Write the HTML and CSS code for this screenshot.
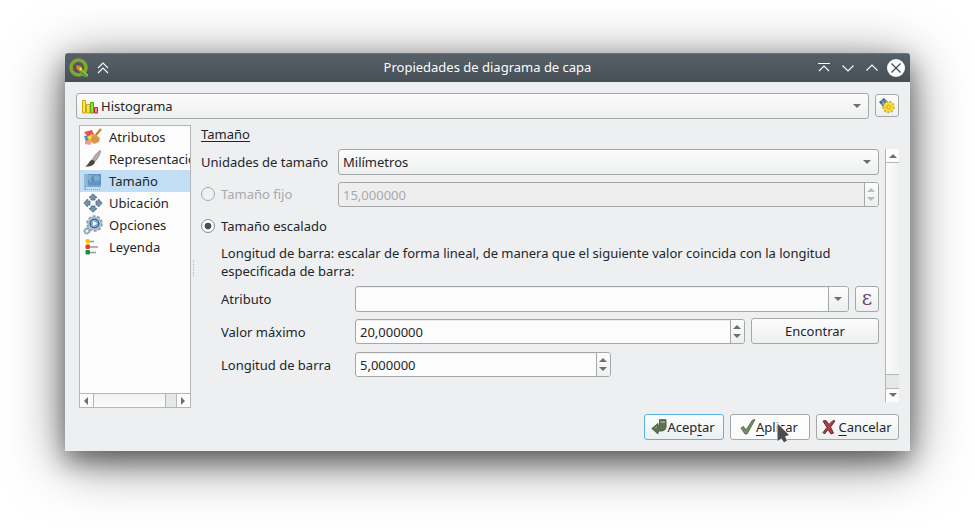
FILE: index.html
```html
<!DOCTYPE html>
<html lang="es">
<head>
<meta charset="utf-8">
<title>Propiedades de diagrama de capa</title>
<link rel="stylesheet" href="styles.css">
</head>
<body>
<div class="window">
  <header class="titlebar">
    <svg class="logo" width="20" height="20" viewBox="0 0 20 20"><circle cx="9.500" cy="9.500" r="7.500" fill="none" stroke="#83a827" stroke-width="3.600"/><path d="M10 9.500l9 7.500v2h-4l-6-7z" fill="#5c9a3c"/><path d="M10.500 10l8.500 7.500" stroke="#a3c644" stroke-width="1.800"/><path d="M7.500 7l5 1.500-2 4-3-1.500z" fill="#ee7f2c"/><path d="M10 11.500l2-2.500 1.500 1.500-2 2.500z" fill="#f0d84c"/></svg>
    <svg class="shade" width="12" height="12" viewBox="0 0 12 12"><path d="M1 6l5-5 5 5M1 11l5-5 5 5"/></svg>
    <h1>Propiedades de diagrama de capa</h1>
    <svg class="ctl" width="12" height="12" viewBox="0 0 12 12"><path d="M0 1.500h12M1 9l5-5 5 5"/></svg>
    <svg class="ctl" width="12" height="12" viewBox="0 0 12 12"><path d="M.5 3.500L6 9l5.500-5.500"/></svg>
    <svg class="ctl" width="12" height="12" viewBox="0 0 12 12"><path d="M.5 8.500L6 3l5.500 5.500"/></svg>
    <svg class="close" width="18" height="18" viewBox="0 0 18 18"><circle cx="9" cy="9" r="9"/><path d="M4.500 4.500l9 9M13.500 4.500l-9 9"/></svg>
  </header>
  <div class="body">
    <div class="toprow">
      <div class="combo type">
        <svg width="16" height="15" viewBox="0 0 16 15"><path d="M.5 1.500h3v12.500h-3z" fill="#fbe34b" stroke="#d1a616"/><path d="M4.500 5.500h3.500v8.500h-3.500z" fill="#fbe34b" stroke="#d1a616"/><path d="M8.500 3.500h3v10.500h-3z" fill="#8be234" stroke="#55a512"/><path d="M12.500 8.500h3v5.500h-3z" fill="#f08e8e" stroke="#c8242c"/></svg>
        <span>Histograma</span><i class="arrow"></i>
      </div>
      <button class="btn gear"><svg width="18" height="17" viewBox="0 0 18 17"><path d="M1 5l5-4 4 4-4 6z" fill="#3f6684"/><path d="M3 3l5 5M8 2L3 8" stroke="#a7bfd0" stroke-width=".8"/><circle cx="10.500" cy="10" r="5.200" fill="#f8dc38" stroke="#d3b01f" stroke-width="2" stroke-dasharray="2.200 1.300"/><circle cx="10.500" cy="10" r="4.700" fill="#f5d93a"/><circle cx="10.500" cy="10" r="1.700" fill="#fbe765" stroke="#c79d18" stroke-width=".9"/></svg></button>
    </div>
    <div class="main">
      <div class="list">
        <ul>
          <li><svg width="20" height="20" viewBox="0 0 20 20"><path d="M1 5l8-2 2 5-5 3z" fill="#ee5047"/><path d="M1 9l5-1 3 7-5 2z" fill="#4a86cc"/><path d="M2 14l4-1 3 2-2 3-5-1z" fill="#f09a8c"/><path d="M4 10l5-3 3 5-4 4z" fill="#f4dc38"/><path d="M9 9l3-2 5 4-1 4-5 2-4-3z" fill="#dc9a52"/><path d="M9 12l4 3M11 10l4 4" stroke="#c5823d" stroke-width=".8"/><path d="M13 8l5-6" stroke="#c4822f" stroke-width="2.300"/></svg>Atributos</li>
          <li><svg width="20" height="20" viewBox="0 0 20 20"><path d="M17.500 1.500c0 4-3 8-5.500 11l-2.500-2c2-4 5-7.500 8-9z" fill="#b0b2af" stroke="#888" stroke-width=".8"/><path d="M9 10.500l3 2c0 3-4 5.500-10 5 4-2 4-5.500 7-7z" fill="#454743"/></svg>Representación</li>
          <li class="selected"><svg width="20" height="20" viewBox="0 0 20 20"><path d="M1 3h17v13H1z" fill="#79a5cb"/><path d="M4 3h14v11H4z" fill="#6293be"/><path d="M5 4l5 0-2 3v5l-3-4zM11 5l3-1 3 2-1 4-2-1-1 3-2-5z" fill="#82add2"/><path d="M1 3h4v13H1z" fill="#a0c5e1" opacity=".6"/><path d="M2 18.500h16" stroke="#7ba3c3" stroke-dasharray="1 1"/><path d="M2 15v4" stroke="#6f99bc"/></svg>Tamaño</li>
          <li><svg width="20" height="20" viewBox="0 0 20 20"><g fill="#7193ad" stroke="#526f87" stroke-width=".8"><path d="M10 .8l4 3.700-2 .2v2.300H8V4.700l-2-.2z"/><path d="M10 19.200l4-3.700-2-.2V13H8v2.300l-2 .2z"/><path d="M.8 10l3.700-4 .2 2H7v4H4.700l-.2 2z"/><path d="M19.200 10l-3.700-4-.2 2H13v4h2.300l.2 2z"/></g></svg>Ubicación</li>
          <li><svg width="20" height="20" viewBox="0 0 20 20"><circle cx="11.500" cy="8.500" r="7.300" fill="none" stroke="#9ba2a8" stroke-width="2" stroke-dasharray="3 1.600"/><circle cx="11.500" cy="8.500" r="6.600" fill="#ccd2d7" stroke="#969ea5" stroke-width=".8"/><circle cx="11.500" cy="8.500" r="4.400" fill="#83afd9" stroke="#315d91" stroke-width="1.400"/><path d="M10 6l4 2.500-4 2.500z" fill="#fff"/><circle cx="4" cy="16" r="2.800" fill="#a9c0d4" stroke="#829eb5" stroke-width="1.400" stroke-dasharray="2 .6"/><circle cx="4" cy="16" r="1.200" fill="#edf3f7"/></svg>Opciones</li>
          <li><svg width="20" height="20" viewBox="0 0 20 20"><path d="M7 4.500h4M7 10h8M7 15.500h6" stroke="#999" stroke-width="1.300"/><rect x="2.500" y="2" width="4.500" height="4.800" rx="1.800" fill="#fcc400"/><rect x="2.500" y="7.500" width="4.500" height="4.500" rx="1.300" fill="#e44117"/><rect x="2.500" y="13" width="4.500" height="4.500" rx="1" fill="#10904f"/></svg>Leyenda</li>
        </ul>
        <div class="hbar"><b><i class="left"></i></b><span></span><em></em><b><i class="right"></i></b></div>
      </div>
      <div class="splitter"></div>
      <section class="content">
        <h2>Tamaño</h2>
        <div class="scroll">
          <div class="form">
            <div class="row units"><label>Unidades de tamaño</label><div class="combo">Milímetros<i class="arrow"></i></div></div>
            <div class="row fixed"><label><i class="radio"></i>Tamaño fijo</label><div class="spin">15,000000<b><i class="up"></i><i class="arrow"></i></b></div></div>
            <div class="row scaled"><label><i class="radio on"></i>Tamaño escalado</label></div>
            <p>Longitud de barra: escalar de forma lineal, de manera que el siguiente valor coincida con la longitud especificada de barra:</p>
            <div class="row sub"><label>Atributo</label><div class="spin drop"><b><i class="arrow"></i></b></div><button class="btn eps">ε</button></div>
            <div class="row sub max"><label>Valor máximo</label><div class="spin">20,000000<b><i class="up"></i><i class="arrow"></i></b></div><button class="btn find">Encontrar</button></div>
            <div class="row sub length"><label>Longitud de barra</label><div class="spin">5,000000<b><i class="up"></i><i class="arrow"></i></b></div></div>
          </div>
          <div class="vbar"><b><i class="up"></i></b><span></span><em></em><b><i class="arrow"></i></b></div>
        </div>
      </section>
    </div>
    <footer>
      <button class="btn ok"><svg width="16" height="16" viewBox="0 0 16 16"><path d="M8.500 .7h6.500V8c0 2.500-2 4-5 4H7v3L.8 9.500 7 4.500v2.500h1.500z" fill="#5f7352" stroke="#46553d" stroke-width=".9"/><path d="M9.500 2h4.500v2H9.500zM6 6.500v2L3 9.500z" fill="#91a484"/></svg><span>Acep<u>t</u>ar</span></button>
      <button class="btn apply"><svg width="16" height="16" viewBox="0 0 16 16"><path d="M1 9l2.500-1.500L6 11l6.500-10L15 .7 7 15H5z" fill="#6f8f60" stroke="#506a43" stroke-width=".9"/></svg><span><u>A</u>plicar</span>
        <svg class="cursor" width="16" height="24" viewBox="0 0 16 24"><path d="M1.500 1.500l11.500 11.500-4 1.500 2 4-3 2-2.500-4-4 2.500z" fill="#4b4e50" stroke="#fff" stroke-width="1.200" paint-order="stroke"/></svg>
      </button>
      <button class="btn cancel"><svg width="16" height="16" viewBox="0 0 16 16"><path d="M2 2l3-.5 3 4 4-4 2 .5-4.500 6 3 6-2.500 1-3-4.500-3.500 4.500-1.500-1.500 4-5z" fill="#b23c48" stroke="#50252b" stroke-width=".9"/></svg><span><u>C</u>ancelar</span></button>
    </footer>
  </div>
</div>
</body>
</html>
```
FILE: styles.css
```css
* { box-sizing: border-box; }
body {
  margin: 0;
  height: 528px;
  padding: 53px 65px 0;
  overflow: hidden;
  background: #fff;
  font: 13px/18px "Noto Sans", sans-serif;
  color: #232629;
}
svg { display: block; flex: none; fill: none; }
h1, h2, ul, p { margin: 0; padding: 0; font-size: inherit; font-weight: 400; }
.window {
  width: 845px;
  height: 398px;
  border-radius: 3px 3px 0 0;
  background: #eeeff1;
  box-shadow: 0 10px 24px rgba(0,0,0,.42), 0 10px 56px rgba(0,0,0,.52);
}
.titlebar {
  height: 29px;
  display: flex;
  align-items: center;
  padding: 0 5px 0 4px;
  border-radius: 3px 3px 0 0;
  border-top: 1px solid #6c757b;
  background: linear-gradient(#566068, #475057);
  color: #fcfcfc;
}
.titlebar svg { margin-top: -1px; }
.titlebar path { stroke: #fcfcfc; stroke-width: 1.1; }
.titlebar .logo path { stroke: none; }
.titlebar .logo path:nth-of-type(2) { stroke: #a3c644; }
.shade { margin-left: 8px; }
.titlebar h1 { flex: 1; text-align: center; padding-left: 48px; margin-top: -2px; }
.ctl { margin-right: 12px; }
.close { margin-left: -3px; }
.close circle { fill: #fcfcfc; }
.titlebar .close path { stroke: #475057; stroke-width: 1.3; }
.body { padding: 11px 11px 0; }
.toprow { display: flex; gap: 6px; align-items: center; }
.combo, .btn {
  height: 26px;
  border: 1px solid #a5a8a9;
  border-radius: 3px;
  background: linear-gradient(#fcfcfc, #eeefef);
  display: flex;
  align-items: center;
  color: inherit;
  font: inherit;
}
.combo { flex: 1; padding: 0 7px 0 4px; }
.type { padding-left: 5px; }
.combo > .arrow { margin-left: auto; }
.type { gap: 3px; }
.btn { padding: 0; justify-content: center; }
.gear { width: 24px; height: 23px; margin-top: -1px; }
.arrow, .up { width: 0; height: 0; border: 4px solid transparent; border-bottom: 0; border-top-color: #6a6f6f; }
.up { border: 4px solid transparent; border-top: 0; border-bottom-color: #6a6f6f; }
.left, .right { width: 0; height: 0; border: 4px solid transparent; }
.left { border-left: 0; border-right-color: #6a6f6f; }
.right { border-right: 0; border-left-color: #6a6f6f; }
.main { display: flex; height: 283px; margin: 6px 0 6px 3px; }
.list {
  width: 112px;
  border: 1px solid #b4b6b8;
  background: #fcfcfc;
  display: flex;
  flex-direction: column;
}
.list ul { flex: 1; list-style: none; overflow: hidden; }
.list li { height: 22px; display: flex; align-items: center; gap: 6px; padding-left: 3px; white-space: nowrap; overflow: hidden; }
.list .selected { background: #c1def4; }
.hbar { height: 14px; display: flex; border-top: 1px solid #b4b6b8; background: linear-gradient(#f0f1f1, #fcfcfc); }
.hbar b, .vbar b { display: flex; align-items: center; justify-content: center; background: #fcfcfc; }
.hbar b { width: 14px; padding-right: 1px; border-right: 1px solid #b4b6b8; }
.hbar b:last-child { width: 13px; border-right: 0; }
.hbar span, .vbar span { flex: 1; }
.hbar em { width: 12px; background: #e6e8e8; border: solid #b4b6b8; border-width: 0 1px; }
.splitter { width: 10px; display: flex; align-items: center; padding-left: 2px; }
.splitter::before { content: ""; height: 17px; border-left: 1px dotted #b4b6b8; margin-top: 3px; }
.content { flex: 1; }
h2 { height: 17px; width: fit-content; border-bottom: 1px solid #232629; }
.scroll { display: flex; height: 253px; margin-top: 7px; gap: 6px; }
.form { width: 678px; }
.row { display: flex; align-items: center; height: 26px; }
.row label { display: flex; align-items: center; width: 137px; flex: none; white-space: nowrap; }
.fixed { height: 25px; margin-top: 7px; color: #a8aaac; }
.fixed label { margin-top: -1px; }
.scaled { height: 18px; margin-top: 10px; }
.radio { width: 14px; height: 14px; margin-right: 6px; border: 1px solid #a5a8a9; border-radius: 50%; background: #fcfcfc; }
.fixed .radio { background: #f0f1f1; }
.radio.on { border-color: #8a8d8e; background: radial-gradient(circle, #4a4f51 3px, #fcfcfc 3.700px); }
.spin {
  height: 25px;
  flex: 1;
  display: flex;
  align-items: center;
  border: 1px solid #a5a8a9;
  border-radius: 3px;
  background: #fcfcfc;
  padding-left: 4px;
  box-shadow: inset 0 1px #eee;
}
.spin b {
  margin-left: auto;
  width: 14px;
  padding-right: 1px;
  align-self: stretch;
  border-left: 1px solid #a5a8a9;
  display: flex;
  flex-direction: column;
  align-items: center;
  justify-content: center;
  gap: 5px;
  background: linear-gradient(#fcfcfc, #eeefef);
  border-radius: 0 2px 2px 0;
}
.fixed .spin { background: #eeeeee; }
.fixed .up { border-bottom-color: #b9bbbc; }
.fixed .arrow { border-top-color: #b9bbbc; }
.form p { margin: 9px 0 6px 20px; height: 36px; letter-spacing: -.01px; }
.sub { padding-left: 20px; }
.sub label { width: 134px; }
.drop { height: 26px; }
.drop b { width: 20px; padding-right: 2px; }
.eps { width: 24px; margin-left: 6px; padding-bottom: 3px; color: #6c4675; font: 20px/20px "DejaVu Serif", serif; }
.max { margin-top: 6px; }
.max label { margin-top: 2px; }
.max .spin { margin-top: 1px; }
.find { width: 128px; margin-left: 6px; }
.length { height: 25px; margin-top: 8px; }
.length .spin { flex: none; width: 256px; }
.vbar { width: 14px; border-left: 1px solid #b4b6b8; display: flex; flex-direction: column; background: linear-gradient(90deg, #fcfcfc, #f0f1f1); }
.vbar b { height: 14px; }
.vbar b:first-child { border-bottom: 1px solid #b4b6b8; }
.vbar b:last-child { height: 13px; padding-bottom: 1px; }
.vbar em { height: 15px; background: #e6e8e8; border: solid #b4b6b8; border-width: 1px 0; }
footer { display: flex; justify-content: flex-end; gap: 6px; }
footer .btn { width: 80px; padding-right: 2px; }
footer .btn.cancel { width: 83px; gap: 1px; }
footer .ok { border-color: #5bb3e3; background: linear-gradient(#fcfcfc, #e9f0f4); }
footer .apply { position: relative; background: #fcfcfc; }
footer u { text-underline-offset: 3px; text-decoration-skip-ink: none; }
.cursor { position: absolute; left: 45px; top: 7px; }
```
